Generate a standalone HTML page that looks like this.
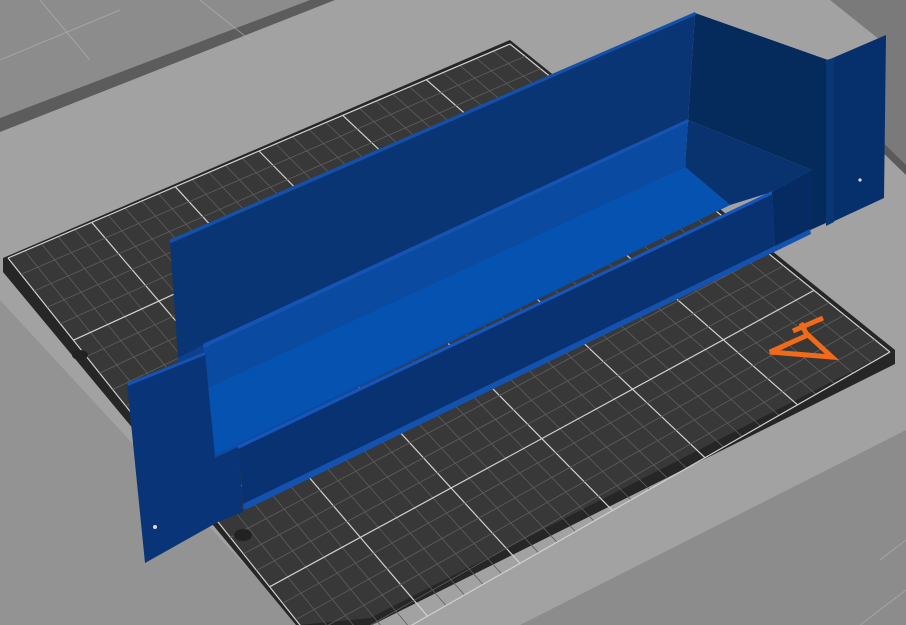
<!DOCTYPE html>
<html><head><meta charset="utf-8"><style>html,body{margin:0;padding:0;background:#8e8e8e;overflow:hidden;width:906px;height:625px}svg{display:block}</style></head>
<body>
<svg id="s" width="906" height="625" viewBox="0 0 906 625" xmlns="http://www.w3.org/2000/svg">
<rect width="906" height="625" fill="#959595"/>
<polygon points="0,130 330,0 906,0 906,625 0,625" fill="#a2a2a2"/>
<polygon points="0,0 310,0 0,118" fill="#8c8c8c"/>
<polygon points="0,118 310,0 335,0 0,132" fill="#5c5c5c"/>
<polygon points="830,0 906,0 906,170 880,150 880,40" fill="#7a7a7a"/>
<polygon points="870,130 906,165 906,175 870,140" fill="#5a5a5a"/>
<polygon points="0,300 300,625 0,625" fill="#939393"/>
<polygon points="520,625 906,430 906,625" fill="#8c8c8c"/>
<g stroke="#b5b5b5" stroke-width="1" opacity="0.6">
<line x1="40" y1="0" x2="90" y2="60"/><line x1="200" y1="0" x2="250" y2="40"/><line x1="0" y1="60" x2="120" y2="10"/>
<line x1="880" y1="560" x2="906" y2="540"/><line x1="860" y1="625" x2="906" y2="590"/>
</g>
<polygon points="3,258 510,40 895,350 895,364 372,625 296,625 3,272" fill="#262626"/>
<polygon points="8,258 510,44 890,352 370,618 300,625" fill="#383838"/>
<g id="grid"></g>
<ellipse cx="80" cy="355" rx="8" ry="5" fill="#222"/>
<ellipse cx="243" cy="535" rx="9" ry="6" fill="#222"/>
<g stroke="#f06a1a" stroke-width="5" fill="none" stroke-linejoin="miter">
<polygon points="770,352 808,335 832,357"/>
<line x1="793" y1="331" x2="823" y2="318"/><line x1="801" y1="323" x2="808" y2="337"/>
</g>
<polygon points="695,13 828,60 828,222 775,246 772,192 812,170 688,120" fill="#052a5c"/>
<polygon points="828,60 886,35 884,198 828,224" fill="#06306c"/>
<polygon points="826,60 834,58 834,222 826,226" fill="#093674"/>
<polygon points="170,242 695,13 688,120 203,345 178,358" fill="#0a3574"/>
<polygon points="169,240 695,12 696,15 171,243" fill="#1450a8"/>
<polygon points="688,120 812,170 772,192 730,205 685,167" fill="#08336f"/>
<polygon points="203,345 688,120 685,167 730,205 238,447 215,458 208,388" fill="#0a4aa0"/>
<polygon points="208,388 685,167 730,205 215,455" fill="#0552b0"/>
<polygon points="203,344 688,119 689,122 204,348" fill="#1554b4"/>
<polygon points="178,358 203,345 208,388 215,455 200,450 185,390" fill="#0b3f90"/>
<polygon points="238,447 772,192 775,246 243,505" fill="#083272"/>
<polygon points="237,446 772,191 773,194 238,449" fill="#1656bb"/>
<polygon points="772,192 812,170 812,228 775,246" fill="#062b62"/>
<polygon points="243,504 810,229 811,234 245,510" fill="#1452b0"/>
<polygon points="127,383 205,352 215,458 238,447 243,512 218,522 145,563" fill="#093578"/>
<polygon points="127,383 205,352 205,355 128,386" fill="#1554b4"/>
<circle cx="155" cy="527" r="2" fill="#ddd"/>
<circle cx="860" cy="180" r="1.6" fill="#ddd"/>
</svg>
<script>
(function(){
var A=[8,258],B=[510,44],C=[890,352],D=[335,669];
function P(u,v){var x=(1-u)*(1-v)*A[0]+u*(1-v)*B[0]+u*v*C[0]+(1-u)*v*D[0];var y=(1-u)*(1-v)*A[1]+u*(1-v)*B[1]+u*v*C[1]+(1-u)*v*D[1];return x.toFixed(1)+","+y.toFixed(1);}
var g=document.getElementById('grid'),h='';
var NU=30,NV=25;
for(var i=0;i<=NU;i++){var u=i/NU;var maj=i%5==0;h+='<polyline fill="none" points="'+P(u,0)+' '+P(u,1)+'" stroke="'+(maj?'#d0d0d0':'#5e5e5e')+'" stroke-width="'+(maj?1.2:0.8)+'"/>';}
for(var j=0;j<=NV;j++){var v=j/NV;var maj=j%5==0;h+='<polyline fill="none" points="'+P(0,v)+' '+P(1,v)+'" stroke="'+(maj?'#d0d0d0':'#5e5e5e')+'" stroke-width="'+(maj?1.2:0.8)+'"/>';}
g.innerHTML=h;
})();
</script>
</body></html>
